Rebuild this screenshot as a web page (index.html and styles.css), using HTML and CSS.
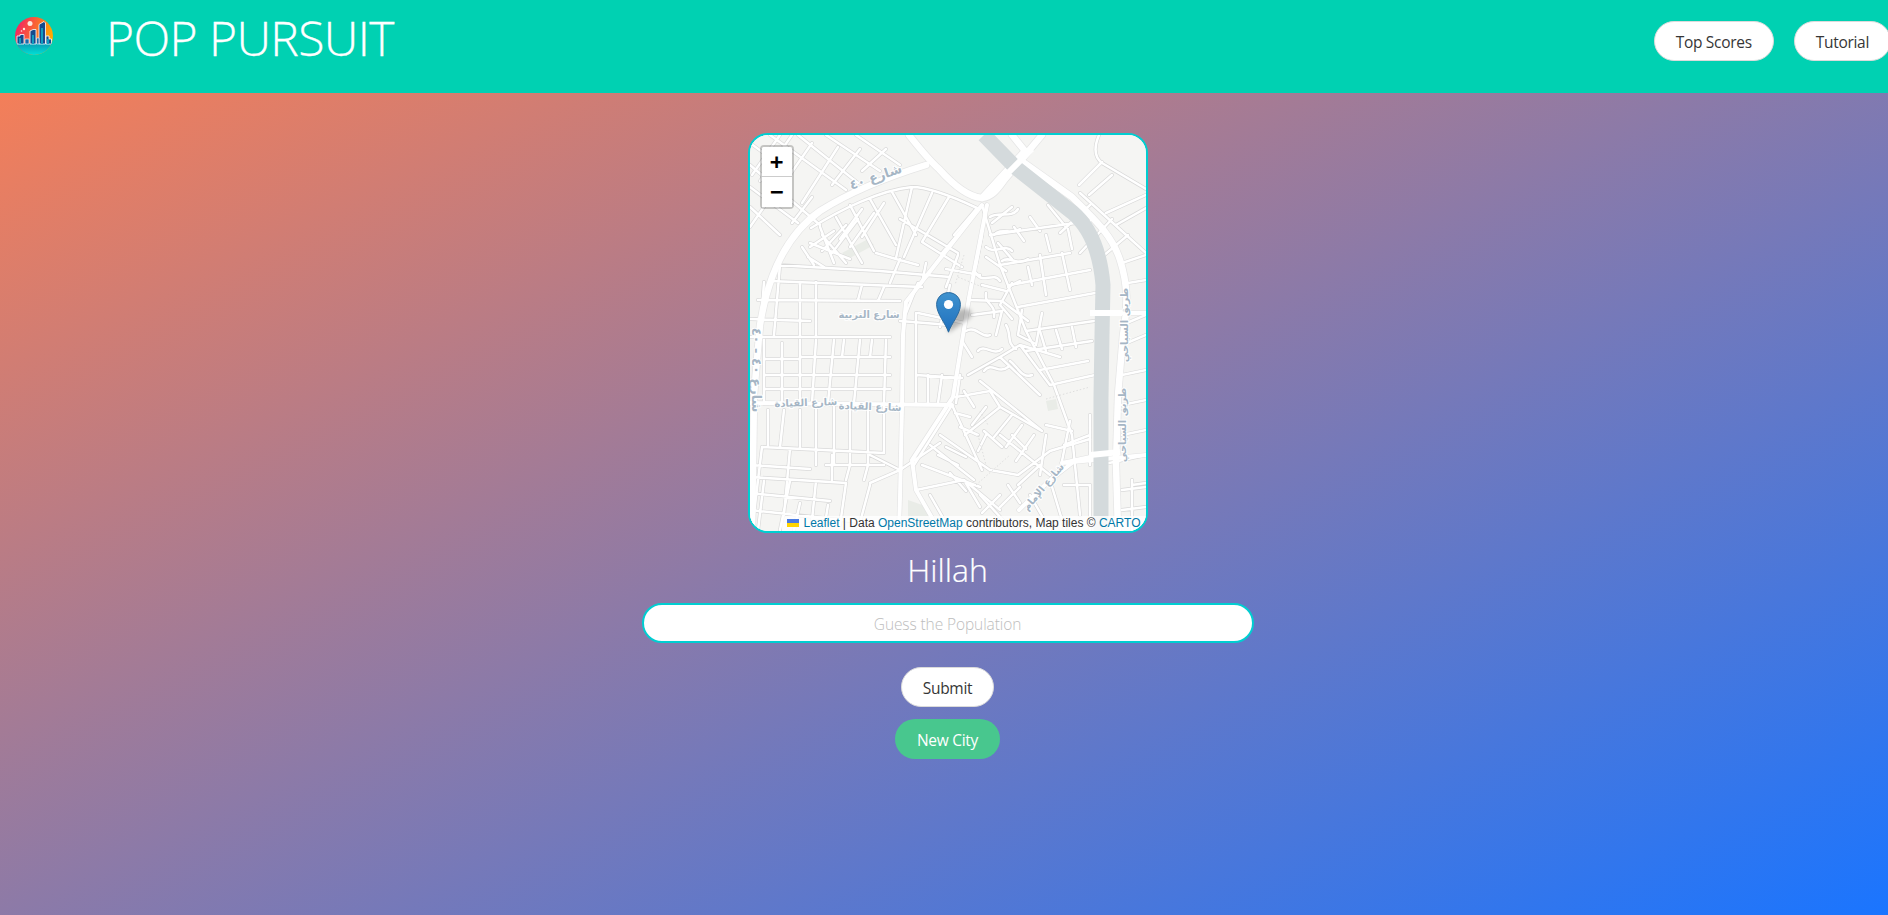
FILE: index.html
```html
<!DOCTYPE html>
<html lang="en">
<head>
<meta charset="utf-8">
<title>Pop Pursuit</title>
<link rel="stylesheet" href="styles.css">
</head>
<body>
<header class="topbar">
  <div class="brand">
    <svg class="logo" viewBox="0 0 38 38" aria-hidden="true">
      <defs>
        <linearGradient id="sky" x1="0" y1="0" x2="1" y2="0.35"><stop offset="0" stop-color="#f2146f"/><stop offset="1" stop-color="#ffa800"/></linearGradient>
        <linearGradient id="sea" x1="0" y1="0" x2="0" y2="1"><stop offset="0" stop-color="#0a9ab4"/><stop offset="1" stop-color="#00e2d6"/></linearGradient>
        <clipPath id="disc"><circle cx="19" cy="19" r="19"/></clipPath>
      </defs>
      <g clip-path="url(#disc)">
        <rect width="38" height="38" fill="url(#sky)"/>
        <rect y="26" width="38" height="12" fill="url(#sea)"/>
        <circle cx="15" cy="6.5" r="2.5" fill="#ffe9dc"/>
        <circle cx="9" cy="12" r="1.2" fill="#ffe9dc"/>
        <circle cx="6.5" cy="14" r="0.8" fill="#ffe9dc"/>
        <path class="tower" d="M2 27V19H5V17.5H9V27Z"/>
        <path class="tower" d="M15 27V14L18 12.5H21V27Z"/>
        <path class="tower" d="M24 27V7.5L29 4.5L30.5 6V27Z"/>
        <path class="tower" d="M31 27V19H34V22H36.5V27Z"/>
        <path class="tower-low" d="M10 27V22H14V27ZM21.5 27V21H24V27Z"/>
        <path class="tower-shade" d="M4 27V21H6V27ZM17 27V18H19V27ZM26 27V11H28V27ZM32 27V22H34V27Z"/>
      </g>
    </svg>
    <h1 class="title">POP PURSUIT</h1>
  </div>
  <nav class="topnav">
    <button class="pill" type="button">Top Scores</button>
    <button class="pill" type="button">Tutorial</button>
  </nav>
</header>

<main class="stage">
  <div class="map">
    <svg class="tiles" viewBox="0 0 396 396" aria-hidden="true">
      <defs>
        <g id="minor">
          <path d="M0 30L70 90M0 52L48 88M0 72L30 100M20 0L96 55M48 0L108 48M76 0L130 36M106 0L150 30M0 8L30 30M30 0L2 40M62 8L26 60M88 12L52 68M110 14L82 50M136 14L112 36M62 62L42 88M42 0L10 46M18 66L0 92"/>
          <path d="M349 0C344 12 344 22 352 28L396 54M329 50L352 27M339 60L362 40M356 78L396 60M366 90L396 73M330 58L396 118M340 70L310 98M362 84L330 118M378 100L352 122"/>
          <path d="M61 93C90 75 130 55 162 52C180 52 210 65 227 73M100 70L124 116M120 64L146 110M142 57L166 100M162 52L146 123M182 58L154 122M199 62L172 107M172 107L212 132M126 118L146 124L168 130M86 82L112 128M70 92L84 128M60 108L100 124M58 122L74 132M84 96L60 112M96 90L72 116M108 84L82 118M124 78L100 112M150 84L208 118M216 90L192 118M227 73L204 100M176 128L172 148M150 124L140 148M112 74L90 104M134 68L112 102M72 100L96 128M52 112L64 130"/>
          <path d="M26 130L130 136L200 142M20 146L172 152M8 165L150 166M0 184L60 186M66 147V200M50 147V200M30 130L24 200M112 150L108 165M134 152L128 166M150 186L200 190M0 202L140 202M168 148L156 178M14 147L10 200M168 178L215 188M200 150L190 192M208 120L196 152"/>
          <path d="M14 205V268M32 208V268M50 205V268M66 205L62 268M84 205L78 268M110 205L104 268M136 205L134 268M50 222H140M50 240H140M50 254H140M16 224H48M16 240H48M16 254H48M166 200V240L212 243M166 240V268M178 240V268M192 240L188 268M210 240L206 268M94 205L92 222M122 205L120 222M166 178V200"/>
          <path d="M18 275V312M34 275L30 312M50 275V312M66 272V330M84 272V330M100 272V330M118 272V330M134 272V318M12 312L134 318M12 312L2 395M40 314L34 380M82 320V345M100 330L96 345M118 330L114 345M0 342L96 348M0 358L80 366M0 375L120 388M40 346L30 395M66 346L62 385M96 348L90 390M120 320L150 335M120 348L150 335M150 335L190 308M76 330H134M0 330L60 334M14 346L8 395M120 350L108 395M50 368L44 395M78 370L74 395"/>
          <path d="M164 330L202 270M172 330L230 352M180 310L224 345M190 300L240 335M202 270L232 335M205 278L220 282M215 300L250 272L292 296M250 272L240 256L206 262M230 246L292 296M218 240L250 222L290 260M250 222L270 210L310 222M270 210L300 250M300 250L345 240M166 355L214 345L230 372M180 360L200 395M214 345L250 375M250 300L300 340M240 335L268 340M268 340L300 316M300 316L340 304M188 320L208 330M196 312L216 322M200 338L216 356M210 292L228 300M236 300L228 316M262 280L244 302M272 290L256 312M284 300L266 326M214 256L224 272M236 272L222 290"/>
          <path d="M232 70L250 130L276 196L304 250L322 300L330 380M250 130L320 118M240 100L340 86M248 108L262 124M264 92L274 106M280 82L290 96M298 70L316 92M260 150L340 135M268 172L345 158M276 196L344 186M276 216L342 206M290 235L338 226M262 148L250 170L262 184M290 120L296 160M312 118L320 155M236 122L256 136M242 88L262 72M232 150L256 156M222 180L252 176M252 176L246 200M272 175L268 200L284 208M292 178L286 210M218 165L252 166L278 186M196 134L230 140M232 100L226 130"/>
          <path d="M240 82C248 76 262 84 268 74M244 100C250 92 262 100 270 94M236 112C244 120 256 108 262 116M252 126C260 120 268 132 278 124M226 138C232 150 244 136 250 146M236 158C234 170 246 168 244 182M256 190C262 200 256 208 266 214M216 196C226 190 232 204 240 200M228 216C234 208 244 222 252 214M234 236C242 226 248 240 258 232M260 226C268 232 272 244 282 240M290 196L296 216M306 195L312 214M322 192L326 212M296 100L300 116M318 94L322 114M278 132L282 150M212 206L222 222M258 152L270 146"/>
          <path d="M234 296L252 312M262 300L276 314M296 300L290 340M320 286L312 326M340 280V330M340 300L314 310M314 350L340 350M340 350V395M350 330L396 320M372 190L396 180M372 210L396 200M372 240L396 235M372 270L396 265M372 300L396 295M382 345V395M382 350L396 348M372 128L396 120M378 148L396 145M230 360L262 395M258 350L270 368M280 360L300 395M300 345L315 395M250 360L232 378M270 352L250 372M290 330L268 350M372 355L396 352M372 375L396 372M296 290L322 296"/>
        </g>
        <g id="major">
          <path d="M2 395L4 260L10 190C18 140 36 100 70 76C105 54 150 38 176 30M159 0C170 14 180 26 189 34C205 52 220 62 232 63C244 62 250 50 256 43L292 0M232 63L275 16L262 0M270 25L322 62C345 85 362 100 370 125C378 150 378 170 373 200L368 260L366 330L368 395"/>
        </g>
        <g id="secondary">
          <path d="M232 70L156 167L153 200L152 272L150 362L149 395M237 70L219 163L203 262L162 325L166 355L189 395M0 268L202 270M312 328L396 320M269 375L300 345L322 328M352 178H396M350 320L312 328"/>
        </g>
      </defs>
      <rect class="land" width="396" height="396"/>
      <path class="park" d="M92 118L118 104L124 110L98 124Z"/>
      <path class="park" d="M158 365L178 372L186 396H158Z"/>
      <path class="park" d="M296 266L306 264L308 274L298 276Z"/>
      <use href="#minor" class="casing-minor"/>
      <use href="#secondary" class="casing-secondary"/>
      <use href="#major" class="casing-major"/>
      <use href="#minor" class="fill-minor"/>
      <use href="#secondary" class="fill-secondary"/>
      <use href="#major" class="fill-major"/>
      <path class="river" d="M234 0L266 33L322 77C340 92 350 115 353 150L352 200L351 262V396"/>
      <path class="bridge" d="M252 44L282 14M340 320L370 317M340 178H372"/>
      <path class="trail" d="M214 120L205 150M208 142L232 152M296 264L340 252M226 350L260 320M228 300L236 330M230 276L238 290"/>
      <g class="labels">
        <text class="label-wide" x="127" y="46" transform="rotate(-19 127 46)">شارع ٤٠</text>
        <text x="119" y="183">شارع التربية</text>
        <text x="56" y="271" transform="rotate(-2 56 271)">شارع القيادة</text>
        <text x="120" y="275" transform="rotate(2 120 275)">شارع القيادة</text>
        <text class="label-wide" x="2" y="235" transform="rotate(90 2 235)">شارع ٤٠ - ٤٠</text>
        <text x="378" y="190" transform="rotate(-90 378 190)">طريق السياحي</text>
        <text x="376" y="290" transform="rotate(-90 376 290)">طريق السياحي</text>
        <text x="296" y="354" transform="rotate(-50 296 354)">شارع الإمام</text>
      </g>
    </svg>

    <div class="zoom">
      <a class="zoom-btn zoom-in">+</a>
      <a class="zoom-btn">&#8722;</a>
    </div>

    <svg class="marker-shadow" viewBox="0 0 41 41" aria-hidden="true"><path d="M12 41L34 26C38 20 33 15 26 17C20 19 16 22 14 28Z"/></svg>
    <svg class="marker" viewBox="0 0 25 41" aria-label="Map marker">
      <defs><linearGradient id="pin" x1="0" y1="0" x2="0" y2="1"><stop offset="0" stop-color="#3f93cf"/><stop offset="1" stop-color="#1f6fbd"/></linearGradient></defs>
      <path d="M12.5 40.2C10 32 .6 22 .6 12.6C.6 5.8 5.8 .6 12.5 .6S24.4 5.8 24.4 12.6C24.4 22 15 32 12.5 40.2Z" fill="url(#pin)" stroke="#2a6a9e" stroke-width="1"/>
      <circle cx="12.5" cy="12.5" r="4.6" fill="#fff"/>
    </svg>

    <div class="attribution">
      <svg class="flag" viewBox="0 0 12 8" aria-hidden="true"><rect width="12" height="4" fill="#4c7be1"/><rect y="4" width="12" height="4" fill="#ffd500"/></svg>
      <a>Leaflet</a> | Data <a>OpenStreetMap</a> contributors, Map tiles &copy; <a>CARTO</a>
    </div>
  </div>

  <h2 class="city">Hillah</h2>
  <input class="guess" type="text" placeholder="Guess the Population">
  <button class="pill submit" type="button">Submit</button>
  <button class="pill newcity" type="button">New City</button>
</main>
</body>
</html>
```

FILE: styles.css
```css
* { box-sizing: border-box; }
html, body { margin: 0; height: 100%; overflow: hidden; }
body {
  display: flex;
  flex-direction: column;
  font-family: "Open Sans", "Noto Sans", sans-serif;
  color: #fff;
  background: linear-gradient(to bottom right, #ff7f50, #1a75ff);
}
.topbar {
  height: 93px;
  flex: none;
  background: #00d1b2;
  display: flex;
  justify-content: space-between;
  align-items: flex-start;
}
.brand { display: flex; align-items: flex-start; }
.logo { width: 38px; height: 38px; margin: 17px 0 0 15px; }
.tower { fill: #164a8c; stroke: #fff; stroke-width: 0.8; }
.tower-low { fill: #1a6aa8; stroke: #fff; stroke-width: 0.6; }
.tower-shade { fill: #0f9cc0; }
.title {
  margin: 4px 0 0 53px;
  font-size: 48px;
  line-height: 68px;
  font-weight: 300;
  letter-spacing: -0.6px;
  color: #fff;
  -webkit-text-stroke: 0.3px #fff;
}
.topnav { display: flex; gap: 20px; margin: 21px -3px 0 0; }
.pill {
  height: 40px;
  padding: 1px 21px 0;
  border: 1px solid #dbdbdb;
  border-radius: 20px;
  background: #fff;
  color: #363636;
  font: 400 15.5px "Open Sans", "Noto Sans", sans-serif;
  letter-spacing: -0.3px;
}
.stage {
  flex: 1;
  display: flex;
  flex-direction: column;
  align-items: center;
  padding: 40px 0 0 7px;
}
.map {
  position: relative;
  width: 400px;
  height: 400px;
  flex: none;
  border: 2px solid #00ced1;
  border-radius: 20px;
  overflow: hidden;
  background: #f5f5f3;
}
.tiles { display: block; width: 396px; height: 396px; }
.land { fill: #f5f5f3; }
.park { fill: #e9ece7; }
.tiles use { fill: none; stroke-linejoin: round; stroke-linecap: round; }
.casing-minor { stroke: #d9d9d9; stroke-width: 3.8; }
.fill-minor { stroke: #fff; stroke-width: 2.5; }
.casing-secondary { stroke: #e2e2e2; stroke-width: 5.2; }
.fill-secondary { stroke: #fff; stroke-width: 4; }
.casing-major { stroke: #e6e6e6; stroke-width: 8; }
.fill-major { stroke: #fff; stroke-width: 6.5; }
.river { fill: none; stroke: #d4dadc; stroke-width: 15; }
.bridge { fill: none; stroke: #fff; stroke-width: 6; }
.trail { fill: none; stroke: #d8d8d8; stroke-width: 0.8; stroke-dasharray: 1.5 2; }
.labels text {
  font: 700 10px "DejaVu Sans", "Noto Sans", sans-serif;
  fill: #a6b6c5;
  stroke: #fff;
  stroke-width: 2px;
  paint-order: stroke;
  text-anchor: middle;
}
.labels .label-wide { font-size: 13px; }
.zoom {
  position: absolute;
  left: 10px;
  top: 10px;
  width: 34px;
  border: 2px solid rgba(0, 0, 0, 0.2);
  border-radius: 4px;
  background-clip: padding-box;
}
.zoom-btn {
  display: block;
  width: 30px;
  height: 30px;
  background: #fff;
  color: #000;
  text-align: center;
  font: 700 22px/30px "DejaVu Sans Mono", "Liberation Mono", monospace;
}
.zoom-in { border-bottom: 1px solid #ccc; border-radius: 2px 2px 0 0; }
.marker {
  position: absolute;
  left: 186px;
  top: 157px;
  width: 25px;
  height: 41px;
}
.marker-shadow {
  position: absolute;
  left: 186px;
  top: 157px;
  width: 41px;
  height: 41px;
  fill: rgba(0, 0, 0, 0.25);
  filter: blur(2px);
}
.attribution {
  position: absolute;
  right: 0;
  bottom: 0;
  height: 15px;
  padding: 0 5px;
  background: rgba(255, 255, 255, 0.8);
  color: #333;
  font: 12px/15px "Liberation Sans", Arial, sans-serif;
  white-space: nowrap;
}
.attribution a { color: #0078a8; }
.flag { width: 12px; height: 8px; margin-right: 1px; }
.city {
  margin: 13px 0 0;
  height: 48px;
  font-size: 32px;
  line-height: 48px;
  font-weight: 300;
  color: #fff;
  -webkit-text-stroke: 0.2px #fff;
}
.guess {
  width: 612px;
  height: 40px;
  margin: 9px 0 0;
  padding-top: 3px;
  border: 2px solid #00ced1;
  border-radius: 20px;
  background: #fff;
  text-align: center;
  font: 300 15.5px "Open Sans", "Noto Sans", sans-serif;
  letter-spacing: -0.1px;
  outline: none;
}
.guess::placeholder { color: #bdbdbd; opacity: 1; }
.submit { margin-top: 24px; }
.newcity {
  margin-top: 12px;
  border-color: transparent;
  background: #48c78e;
  color: #fff;
}
```
